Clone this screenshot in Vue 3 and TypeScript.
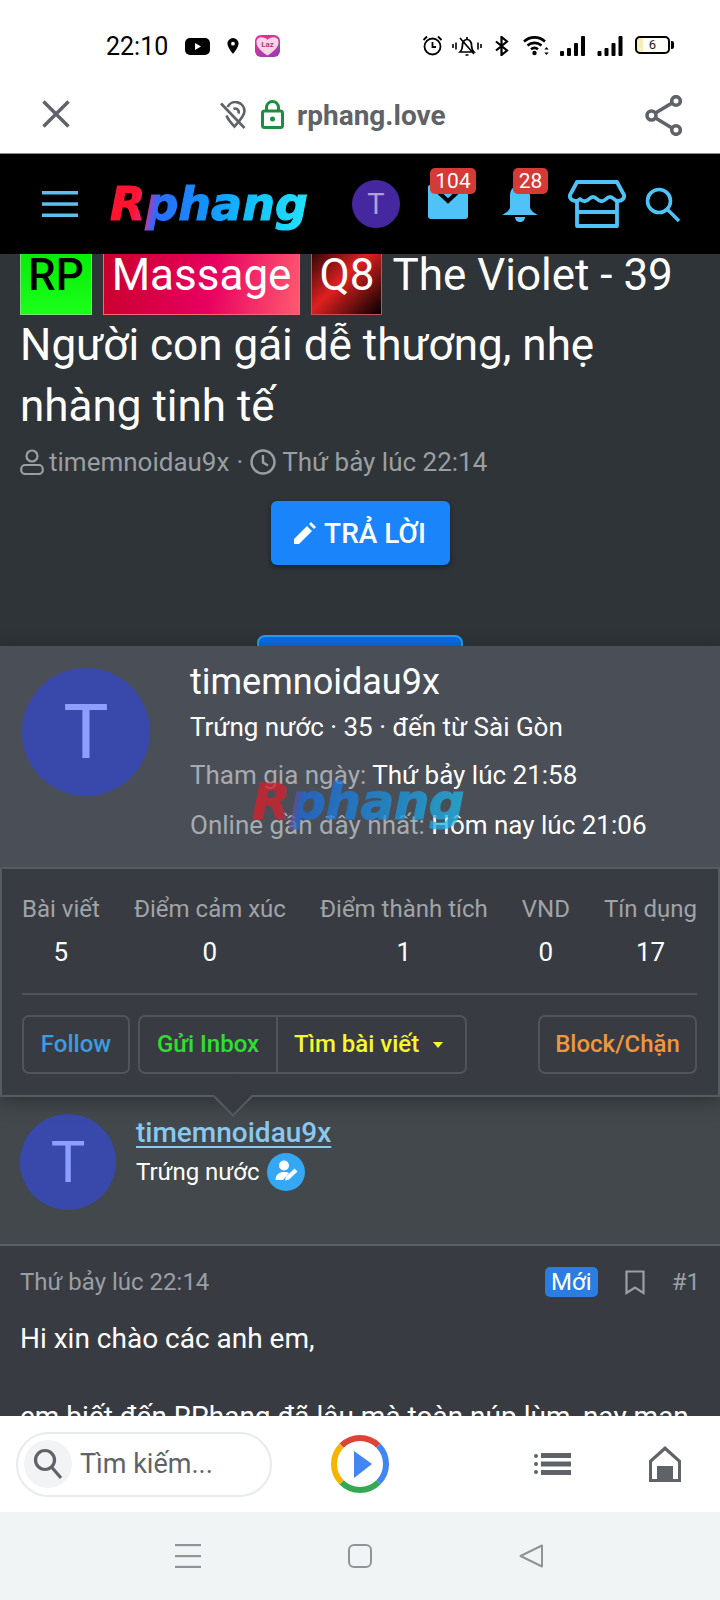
<script setup lang="ts">
interface Stat { label: string; value: string }
const stats: Stat[] = [
  { label: 'Bài viết', value: '5' },
  { label: 'Điểm cảm xúc', value: '0' },
  { label: 'Điểm thành tích', value: '1' },
  { label: 'VND', value: '0' },
  { label: 'Tín dụng', value: '17' },
]
</script>

<template>
  <div class="phone">
    <div class="status">
      <span class="time">22:10</span>
      <svg class="yt" width="25" height="17" viewBox="0 0 25 17"><rect width="25" height="17" rx="5" fill="#000"/><path d="M10 5l6 3.500-6 3.500z" fill="#fff"/></svg>
      <svg class="pin" width="12" height="16" viewBox="0 0 12 16"><path fill-rule="evenodd" d="M6 0a5.600 5.600 0 0 1 5.600 5.600C11.600 9.500 6 16 6 16S.4 9.500.4 5.600A5.600 5.600 0 0 1 6 0zm0 3.800a1.900 1.900 0 1 0 0 3.800 1.900 1.900 0 0 0 0-3.800z" fill="#000"/></svg>
      <span class="laz">
        <svg width="25" height="22" viewBox="0 0 26 22"><path d="M13 21C6 16 1.500 12 1.500 7 1.500 3.500 4 2 7 2c2.500 0 4.700 1 6 2.500C14.300 3 16.500 2 19 2c3 0 5.500 1.500 5.500 5 0 5-4.500 9-11.500 14z" fill="#f8d4e6"/></svg>
        <span class="laz-t">Laz</span>
      </span>
      <span class="status-gap"></span>
      <svg class="alarm" width="21" height="21" viewBox="0 0 21 21" fill="none" stroke="#000" stroke-width="1.800"><circle cx="10.500" cy="11.500" r="8"/><path d="M10.500 7v5h3.500M1.500 5l3.500-3.500M19.500 5L16 1.500"/></svg>
      <svg class="mute" width="30" height="22" viewBox="0 0 30 22" fill="none" stroke="#000" stroke-width="1.700"><path d="M8 17h14c-2-2-2.500-4-2.500-7 0-3-2-5.500-4.500-5.500S10.500 7 10.500 10c0 3-.5 5-2.500 7zM13.500 20h3M15 2v2M8 3l14 16"/><path d="M1 9v4M4 7.500v7M26 7.500v7M29 9v4" stroke-width="1.600"/></svg>
      <svg class="bt" width="14" height="20" viewBox="0 0 14 20" fill="none" stroke="#000" stroke-width="2.200"><path d="M1 5.500l11 9-5.500 4.500V1l5.500 4.500-11 9"/></svg>
      <svg class="wifi" width="26" height="21" viewBox="0 0 26 21" fill="none" stroke="#000" stroke-width="2.600"><path d="M1 6.500C7 1 16 1 22 6.500M4.500 10.500c4-3.500 10-3.500 14 0M8 14.300c2.200-1.800 4.800-1.800 7 0"/><circle cx="11.500" cy="18" r="2.200" fill="#000" stroke="none"/><path d="M23.500 12l-2.200 2.500h4.400zM23.500 20l-2.200-2.500h4.400z" fill="#000" stroke="none"/></svg>
      <svg class="sig1" width="25" height="21" viewBox="0 0 25 21" fill="#000"><rect y="16" width="4" height="5" rx="1"/><rect x="7" y="13" width="4" height="8" rx="1"/><rect x="14" y="8" width="4" height="13" rx="1"/><rect x="21" y="1" width="4" height="20" rx="1"/></svg>
      <svg class="sig2" width="26" height="21" viewBox="0 0 25 21" fill="#000"><rect y="16" width="4" height="5" rx="1"/><rect x="7" y="13" width="4" height="8" rx="1"/><rect x="14" y="8" width="4" height="13" rx="1"/><rect x="21" y="1" width="4" height="20" rx="1"/></svg>
      <span class="batt"><span class="batt-body">6</span><span class="batt-nub"></span></span>
    </div>

    <div class="browser">
      <svg class="x" width="28" height="28" viewBox="0 0 28 28" stroke="#5f6368" stroke-width="3.500" fill="none"><path d="M1.500 1.500l25 25M26.500 1.500l-25 25"/></svg>
      <svg class="priv" width="27" height="28" viewBox="0 0 27 28" fill="none" stroke="#5f6368" stroke-width="2.600"><path d="M8.500 6A9 9 0 0 1 25.500 10C25.500 15 19.500 21 15.500 25.500 12 22 9 18.500 7.500 14.500"/><path d="M14.500 8a3.600 3.600 0 0 1 5 4.500"/><path d="M2 2.500l23.500 24.500"/></svg>
      <svg class="lock" width="23" height="29" viewBox="0 0 23 29" fill="none" stroke="#1e8e3e" stroke-width="3"><rect x="1.500" y="11" width="20" height="16.500" rx="2"/><path d="M5.500 11V7.500a6 6 0 0 1 12 0V11"/><circle cx="11.500" cy="19" r="2.500" fill="#1e8e3e" stroke="none"/></svg>
      <span class="host">rphang.love</span>
      <svg class="share" width="37" height="41" viewBox="0 0 37 41" fill="none" stroke="#5f6368" stroke-width="3.600"><circle cx="6.500" cy="20.500" r="4.500"/><circle cx="31" cy="6" r="4.300"/><circle cx="31" cy="35" r="4.300"/><path d="M10.500 18l16.500-10M10.500 23l16.500 10"/></svg>
    </div>

    <header class="site">
      <svg class="burger" width="36" height="26" viewBox="0 0 36 26" fill="#5cc0ec"><rect width="36" height="3.500"/><rect y="11.300" width="36" height="3.500"/><rect y="22.500" width="36" height="3.500"/></svg>
      <span class="logo">Rphang</span>
      <span class="hav">T</span>
      <span class="hi mail">
        <svg width="40" height="34" viewBox="0 0 40 34"><path d="M2 0h36a2 2 0 0 1 2 2v29a3 3 0 0 1-3 3H3a3 3 0 0 1-3-3V2a2 2 0 0 1 2-2z" fill="#4fc3f7"/><path d="M5 2l15 14L35 2" fill="none" stroke="#000" stroke-width="4"/></svg>
        <span class="badge b-mail">104</span>
      </span>
      <span class="hi bell">
        <svg width="36" height="38" viewBox="0 0 36 38"><path d="M18 0c6 0 10 4 10 11v11c0 3 4 6 8 8H0c4-2 8-5 8-8V11C8 4 12 0 18 0z" fill="#4fc3f7"/><path d="M13 32h10c0 3-2 5-5 5s-5-2-5-5z" fill="#4fc3f7"/></svg>
        <span class="badge b-bell">28</span>
      </span>
      <svg class="store" width="58" height="48" viewBox="0 0 58 48" fill="none" stroke="#4fc3f7" stroke-width="3.800" stroke-linejoin="round"><path d="M9 2h40l7 13c1 5-6 8-10 4-3-3-5-3-8 0-3 3-6 3-9 0-3-3-5-3-8 0-3 3-6 3-9 0C8 23 1 20 2 15z"/><path d="M9 21v25h40V21M9 32h40"/></svg>
      <svg class="find" width="36" height="36" viewBox="0 0 36 36" fill="none" stroke="#4fc3f7" stroke-width="3.600"><circle cx="14" cy="14" r="11.500"/><path d="M22.500 22.500L34 34"/></svg>
    </header>

    <main class="content">
      <section class="hero">
        <h1 class="title"><span class="tag tag-rp">RP</span> <span class="tag tag-ms">Massage</span> <span class="tag tag-q8">Q8</span> The Violet - 39 Người con gái dễ thương, nhẹ nhàng tinh tế</h1>
        <div class="meta">
          <svg width="24" height="26" viewBox="0 0 24 26" fill="none" stroke="#9a9fa3" stroke-width="2.200"><circle cx="12" cy="7" r="5.500"/><rect x="1.200" y="16" width="21.600" height="9" rx="4"/></svg>
          <span class="mt1">timemnoidau9x</span>
          <span class="mdot">·</span>
          <svg class="clock" width="26" height="26" viewBox="0 0 26 26" fill="none" stroke="#9a9fa3" stroke-width="2.400"><circle cx="13" cy="13" r="11.500"/><path d="M13 6v7.500l5 3"/></svg>
          <span class="mt2">Thứ bảy lúc 22:14</span>
        </div>
        <div class="reply-row">
          <button class="reply">
            <svg width="22" height="22" viewBox="0 0 22 22" fill="#fff"><path d="M0 22v-5L13 4l5 5L5 22zM15 2l2-2 5 5-2 2z"/></svg>
            TRẢ LỜI
          </button>
        </div>
        <div class="second-row"><div class="second"></div></div>
      </section>

      <section class="author">
        <span class="av-md">T</span>
        <div class="author-text">
          <a class="author-name">timemnoidau9x</a>
          <div class="author-rank">
            <span>Trứng nước</span>
            <svg class="rank-ico" width="38" height="38" viewBox="0 0 38 38"><circle cx="19" cy="19" r="19" fill="#35a8f5"/><g fill="#fff"><circle cx="17" cy="12.500" r="5"/><path d="M8.500 27c0-5.500 4-8 8.500-8 2 0 3.500.4 5 1l-6 7z"/><path d="M18 27.500l1-4 8.500-8 3 3-8.500 8z"/></g></svg>
          </div>
        </div>
      </section>

      <section class="post">
        <div class="post-head">
          <span class="post-time">Thứ bảy lúc 22:14</span>
          <span class="new">Mới</span>
          <svg class="bm" width="20" height="25" viewBox="0 0 20 25" fill="none" stroke="#9a9fa3" stroke-width="2.200"><path d="M1.500 1.500h17v21.500L10 17.500 1.500 23z"/></svg>
          <span class="num">#1</span>
        </div>
        <p class="body">Hi xin chào các anh em,</p>
        <p class="body gap">em biết đến RPhang đã lâu mà toàn núp lùm, nay mạn</p>
      </section>

      <aside class="card">
        <div class="card-top">
          <span class="av-lg">T</span>
          <div class="card-info">
            <div class="c-name">timemnoidau9x</div>
            <div class="c-sub">Trứng nước · 35 · đến từ Sài Gòn</div>
            <div class="c-row r3"><span class="muted">Tham gia ngày:</span> Thứ bảy lúc 21:58</div>
            <div class="c-row r4"><span class="muted">Online gần đây nhất:</span> Hôm nay lúc 21:06</div>
          </div>
          <span class="mark">Rphang</span>
        </div>
        <div class="card-bottom">
          <div class="stats">
            <div v-for="s in stats" :key="s.label" class="stat">
              <div class="s-label">{{ s.label }}</div>
              <div class="s-val">{{ s.value }}</div>
            </div>
          </div>
          <div class="rule"></div>
          <div class="actions">
            <span class="act follow">Follow</span>
            <span class="group">
              <span class="g1">Gửi Inbox</span>
              <span class="g2">Tìm bài viết<i class="caret"></i></span>
            </span>
            <span class="act block">Block/Chặn</span>
          </div>
        </div>
        <span class="arrow"></span>
      </aside>
    </main>

    <div class="bar">
      <div class="pill">
        <span class="pill-ico">
          <svg width="30" height="32" viewBox="0 0 30 32" fill="none" stroke="#5f6368" stroke-width="3.200"><circle cx="12" cy="12" r="9.500"/><path d="M18.500 19L28 30"/></svg>
        </span>
        <span class="pill-t">Tìm kiếm...</span>
      </div>
      <svg class="play" width="60" height="60" viewBox="0 0 60 60" fill="none" stroke-width="6"><path d="M11.600 11.600A26 26 0 0 1 48.400 11.600" stroke="#db4437"/><path d="M48.400 11.600A26 26 0 0 1 48.400 48.400" stroke="#4285f4"/><path d="M48.400 48.400A26 26 0 0 1 11.600 48.400" stroke="#34a853"/><path d="M11.600 48.400A26 26 0 0 1 11.600 11.600" stroke="#f4b400"/><path d="M24 17l18 13-18 14z" fill="#4285f4" stroke="none"/></svg>
      <svg class="list" width="37" height="22" viewBox="0 0 37 22" fill="#5f6368"><circle cx="2" cy="3" r="2"/><circle cx="2" cy="11" r="2"/><circle cx="2" cy="19" r="2"/><rect x="7" y="0" width="30" height="5"/><rect x="7" y="8.500" width="30" height="5"/><rect x="7" y="17" width="30" height="5"/></svg>
      <svg class="home" width="34" height="36" viewBox="0 0 34 36" fill="#5f6368"><path fill-rule="evenodd" d="M17 0l16 14.500V36H1V14.500zM17 4.500L4 16v17h5V20h16v13h5V16z"/><rect x="9" y="20" width="16" height="16"/></svg>
    </div>

    <nav class="nav">
      <svg width="26" height="24" viewBox="0 0 26 24" fill="#8f9496"><rect width="26" height="2.200"/><rect y="11" width="26" height="2.200"/><rect y="21.800" width="26" height="2.200"/></svg>
      <svg width="24" height="24" viewBox="0 0 24 24" fill="none" stroke="#8f9496" stroke-width="2"><rect x="1" y="1" width="22" height="22" rx="5"/></svg>
      <svg width="24" height="24" viewBox="0 0 24 24" fill="none" stroke="#8f9496" stroke-width="2" stroke-linejoin="round"><path d="M23 1.500v21L1.500 12z"/></svg>
    </nav>
  </div>
</template>

<style>
html, body { margin: 0; padding: 0; background: #fff; }
</style>

<style scoped>
.phone {
  width: 720px;
  height: 1600px;
  display: flex;
  flex-direction: column;
  overflow: hidden;
  font-family: Roboto, "Noto Sans", sans-serif;
  background: #fff;
  color: #fff;
}
.status {
  height: 77px;
  box-sizing: border-box;
  padding: 35px 46px 0 106px;
  display: flex;
  align-items: flex-start;
  color: #000;
  flex: none;
}
.status > * { flex: none; }
.time { font-size: 25px; line-height: 24px; width: 62px; }
.yt { margin: 3px 0 0 17px; }
.pin { margin: 3px 0 0 17px; }
.laz {
  margin: 0 0 0 16px;
  width: 25px;
  height: 22px;
  border-radius: 6px;
  background: linear-gradient(160deg, #ee2c86, #b03ca8 70%, #8a3fb0);
  position: relative;
  display: block;
  overflow: hidden;
}
.laz svg { position: absolute; left: 0; top: 0; width: 25px; }
.laz-t { position: absolute; left: 0; right: 0; top: 5px; text-align: center; font-size: 8px; line-height: 9px; font-weight: 700; color: #b03a80; }
.status-gap { flex: 1; }
.mute { margin-left: 9px; }
.bt { margin: 1px 0 0 13px; }
.wifi { margin-left: 14px; }
.sig1 { margin-left: 11px; }
.sig2 { margin-left: 12px; }
.batt { display: flex; align-items: center; margin-left: 12px; height: 20px; }
.batt-body {
  width: 35px;
  height: 18px;
  box-sizing: border-box;
  border: 2px solid #000;
  border-radius: 5px;
  background: linear-gradient(90deg, #f6eebb 0 18%, #fffef8 18%);
  font-size: 13px;
  line-height: 14px;
  text-align: center;
  color: #222;
}
.batt-nub { width: 3px; height: 8px; margin-left: 1px; background: #000; border-radius: 0 2px 2px 0; }

.browser {
  height: 77px;
  box-sizing: border-box;
  border-bottom: 1px solid #8a8d90;
  display: flex;
  align-items: center;
  padding-left: 42px;
  flex: none;
}
.x { margin-top: -2px; }
.priv { margin: 0 0 0 149px; }
.lock { margin-left: 15px; margin-top: -1px; }
.host { margin-left: 13px; font-size: 28px; font-weight: 700; color: #5f6368; width: 348px; }

.site {
  height: 100px;
  background: #000;
  display: flex;
  align-items: center;
  padding-left: 42px;
  flex: none;
}
.site > * { flex: none; }
.logo, .mark {
  font-family: "DejaVu Sans", sans-serif;
  font-weight: 700;
  font-style: italic;
  -webkit-background-clip: text;
  background-clip: text;
  color: transparent;
  -webkit-text-stroke: 1.2px transparent;
}
.logo {
  margin-left: 32px;
  width: 198px;
  margin-right: -2px;
  font-size: 46px;
  line-height: 56px;
  background-image: linear-gradient(100deg, #ff1430 0, #ff1430 14%, #e02a90 20%, #2a6cff 25%, #1296ff 50%, #16c8ff 75%, #22e4ff 100%);
}
.hav {
  margin-left: 46px;
  width: 48px;
  height: 48px;
  border-radius: 50%;
  background: #4527a0;
  color: #b39ddb;
  text-align: center;
  font-size: 29px;
  line-height: 48px;
}
.hi { position: relative; display: block; align-self: flex-start; }
.mail { margin: 31px 0 0 28px; width: 40px; height: 34px; }
.bell { margin: 31px 0 0 34px; width: 36px; height: 38px; }
.badge {
  position: absolute;
  top: -17px;
  height: 26px;
  border-radius: 5px;
  background: #d43a36;
  color: #fff;
  font-size: 21px;
  line-height: 26px;
  text-align: center;
}
.b-mail { left: 2px; width: 46px; }
.b-bell { left: 11px; width: 35px; }
.store { margin-left: 30px; }
.find { margin-left: 19px; margin-top: 1px; }

.content {
  flex: 1;
  min-height: 0;
  position: relative;
  overflow: hidden;
  background: #383c42;
}
.hero { background: #2f3439; padding: 0 20px; height: 441px; box-sizing: border-box; overflow: hidden; }
.title {
  margin: -18px 0 0;
  font-size: 44px;
  line-height: 61px;
  font-weight: 400;
  color: #fff;
  width: 680px;
}
.tag {
  display: inline-block;
  padding: 8px 9px;
  border: 1px solid;
  line-height: 61px;
}
.tag-rp { color: #000; font-weight: 500; background: linear-gradient(180deg, #00e800, #1bff1b); border-color: #7be07b; padding: 8px 7px; }
.tag-ms { background: linear-gradient(100deg, #c8002a, #e80060 55%, #ff5a70); border-color: #f06a70; padding: 8px; }
.tag-q8 { background: linear-gradient(135deg, #000 0, #e02020 50%, #000 100%); border-color: #c85050; padding: 8px 7px; }
.meta {
  margin-top: 7px;
  display: flex;
  align-items: center;
  height: 36px;
  font-size: 26px;
  color: #9a9fa3;
}
.mt1 { margin-left: 5px; }
.mdot { margin: 0 7px; }
.mt2 { margin-left: 6px; }
.reply-row { margin-top: 21px; display: flex; justify-content: center; }
.reply {
  width: 179px;
  height: 64px;
  border: none;
  border-radius: 6px;
  background: #1a85fb;
  box-shadow: 0 2px 5px rgba(0, 0, 0, .4);
  color: #fff;
  font-family: inherit;
  font-size: 28px;
  font-weight: 500;
  display: flex;
  align-items: center;
  justify-content: center;
  gap: 8px;
  padding: 0;
}
.second-row { margin-top: 70px; display: flex; justify-content: center; }
.second {
  width: 206px;
  height: 60px;
  box-sizing: border-box;
  border: 2px solid #2a9df4;
  border-radius: 8px;
  background: #0a6ce8;
}
.author {
  height: 551px;
  box-sizing: border-box;
  padding: 419px 20px 0;
  background: #42484c;
  border-bottom: 2px solid #5a5f63;
  display: flex;
  align-items: flex-start;
  gap: 20px;
}
.av-md {
  width: 96px;
  height: 96px;
  border-radius: 50%;
  background: #3949ab;
  color: #8c9eff;
  font-size: 58px;
  line-height: 96px;
  text-align: center;
  flex: none;
}
.author-text { padding-top: 1px; }
.author-name {
  display: block;
  font-size: 28px;
  line-height: 35px;
  font-weight: 500;
  color: #8bc8ee;
  text-decoration: underline;
  text-decoration-thickness: 2px;
  text-underline-offset: 4px;
}
.author-rank { display: flex; align-items: center; gap: 7px; font-size: 24px; margin-top: 3px; }
.post { padding: 0 20px; background: #383c42; }
.post-head { display: flex; align-items: center; height: 30px; margin-top: 21px; font-size: 24px; color: #9a9fa3; }
.post-time { flex: 1; }
.new {
  width: 53px;
  height: 30px;
  border-radius: 5px;
  background: #2a7de1;
  color: #fff;
  font-size: 24px;
  line-height: 30px;
  text-align: center;
}
.bm { margin-left: 27px; }
.num { margin-left: 27px; }
.body { margin: 22px 0 0; font-size: 28px; line-height: 39px; color: #fff; white-space: nowrap; }
.body.gap { margin-top: 39px; }

.card {
  position: absolute;
  left: 0;
  top: 392px;
  width: 720px;
  height: 451px;
  box-sizing: border-box;
  border: 2px solid #565b62;
  border-top: 0;
  background: #383c42;
  box-shadow: 0 4px 18px rgba(0, 0, 0, .35);
}
.card-top {
  height: 223px;
  box-sizing: border-box;
  margin: 0 -2px;
  padding: 22px 0 0 22px;
  background: #4a4f57;
  border-bottom: 2px solid #565b62;
  display: flex;
  position: relative;
}
.av-lg {
  width: 128px;
  height: 128px;
  border-radius: 50%;
  background: #3949ab;
  color: #8c9eff;
  font-size: 76px;
  line-height: 128px;
  text-align: center;
  flex: none;
}
.card-info { margin: -8px 0 0 40px; }
.c-name { font-size: 36px; line-height: 44px; }
.c-sub { margin-top: 5px; font-size: 26px; line-height: 36px; }
.c-row { font-size: 26px; line-height: 36px; }
.r3 { margin-top: 12px; }
.r4 { margin-top: 14px; }
.muted { color: #a7abb0; }
.mark {
  position: absolute;
  left: 252px;
  top: 126px;
  width: 222px;
  font-size: 50px;
  line-height: 60px;
  letter-spacing: -.5px;
  opacity: .75;
  background-image: linear-gradient(100deg, #d8202a 0, #d8202a 15%, #1a6ce0 24%, #1a90e0 60%, #20c0e8 100%);
}
.card-bottom { padding: 22px 21px 0 20px; }
.stats { display: flex; justify-content: space-between; }
.stat { text-align: center; }
.s-label { font-size: 24px; line-height: 36px; color: #a0a4a8; }
.s-val { margin-top: 7px; font-size: 26px; line-height: 36px; color: #fff; }
.rule { margin-top: 23px; height: 2px; background: #50555c; }
.actions { margin-top: 20px; display: flex; font-size: 24px; font-weight: 500; }
.act, .group {
  height: 59px;
  box-sizing: border-box;
  border: 2px solid #50555c;
  border-radius: 7px;
  line-height: 55px;
}
.follow { width: 108px; text-align: center; color: #3d9be0; }
.group { margin-left: 8px; width: 329px; display: flex; }
.g1 { width: 138px; text-align: center; color: #2ee02e; border-right: 2px solid #50555c; box-sizing: border-box; }
.g2 { padding-left: 16px; color: #f7f72b; display: flex; align-items: center; }
.caret {
  margin-left: 14px;
  width: 0;
  height: 0;
  border: 5px solid transparent;
  border-top: 6px solid #f7f72b;
  border-bottom: 0;
}
.block { margin-left: auto; width: 159px; text-align: center; color: #f0963c; }
.arrow {
  position: absolute;
  left: 217px;
  bottom: -16px;
  width: 28px;
  height: 28px;
  box-sizing: border-box;
  background: #383c42;
  border: solid #565b62;
  border-width: 0 2px 2px 0;
  transform: rotate(45deg);
}

.bar {
  height: 96px;
  background: #fff;
  flex: none;
  display: flex;
  align-items: center;
  padding-left: 16px;
}
.bar > * { flex: none; }
.pill {
  width: 256px;
  height: 65px;
  box-sizing: border-box;
  border: 2px solid #e8eaeb;
  border-radius: 33px;
  display: flex;
  align-items: center;
  padding-left: 6px;
}
.pill-ico {
  width: 48px;
  height: 48px;
  border-radius: 50%;
  background: #f1f3f4;
  display: flex;
  align-items: center;
  justify-content: center;
}
.pill-t { margin-left: 8px; font-size: 27px; color: #5f6368; }
.play { margin-left: 58px; }
.list { margin-left: 144px; }
.home { margin-left: 77px; }

.nav {
  height: 88px;
  background: #f1f4f5;
  flex: none;
  display: flex;
  align-items: center;
  padding-left: 175px;
  gap: 147px;
  box-sizing: border-box;
}
</style>
